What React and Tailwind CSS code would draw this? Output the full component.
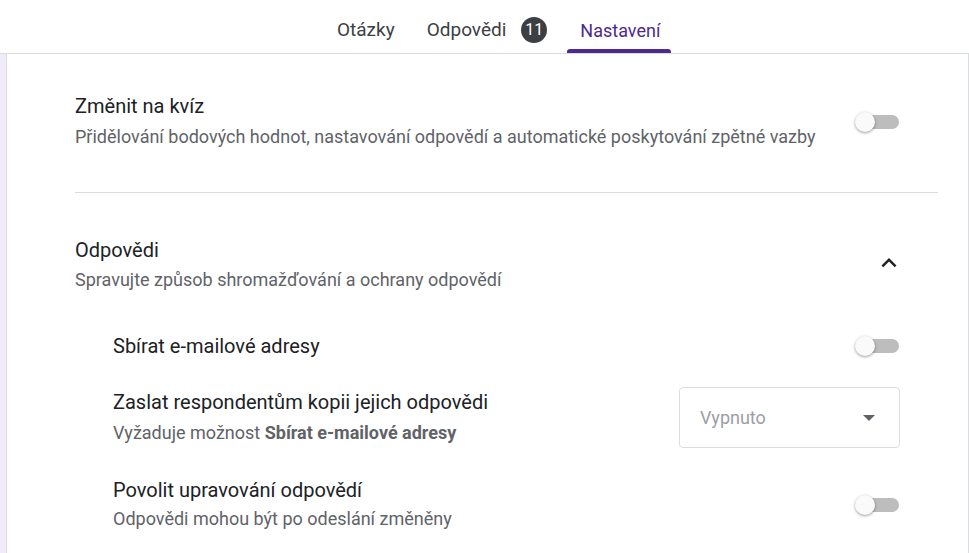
import React from "react";

const font = { fontFamily: "Roboto, 'Liberation Sans', sans-serif" };

function Toggle() {
  return (
    <div className="relative w-[44px] h-[20px] shrink-0">
      <div className="absolute right-0 top-[3px] w-[36px] h-[14px] rounded-full bg-[#bdbdbd]" />
      <div className="absolute left-0 top-0 w-[20px] h-[20px] rounded-full bg-[#fafafa] shadow-[0_1px_3px_rgba(0,0,0,0.4)]" />
    </div>
  );
}

function Tab({ children, active, className = "" }) {
  return (
    <div className={`relative h-full flex items-center px-[13px] pt-[7px] ${className}`}>
      {children}
      {active && <div className="absolute left-0 right-0 bottom-0 h-[4px] rounded-t-[3px] bg-[#4d2a8c]" />}
    </div>
  );
}

export default function App() {
  return (
    <div className="w-[969px] h-[553px] overflow-hidden bg-white flex flex-col" style={font}>
      <header className="h-[54px] shrink-0 border-b border-[#dadce0] flex items-stretch pl-[324px] gap-[6px] text-[19px] text-[#3c4043]">
        <Tab>Otázky</Tab>
        <Tab>
          <span>Odpovědi</span>
          <span className="ml-[15px] w-[26px] h-[26px] rounded-full bg-[#3c4043] text-white text-[16px] flex items-center justify-center">11</span>
        </Tab>
        <Tab active className="ml-[1px] pr-[11px] text-[18px] text-[#4d2a8c]">Nastavení</Tab>
      </header>

      <div className="flex flex-1">
        <div className="w-[6px] bg-[#f0ebf8] border-r border-[#dadce0] box-content" />
        <main className="flex-1 border-r border-[#dadce0] pl-[68px] pr-[30px] pt-[40px]">
          <section className="flex items-center justify-between pr-[39px]">
            <div>
              <div className="text-[20px] leading-[24px] text-[#202124]">Změnit na kvíz</div>
              <div className="mt-[7px] text-[18px] leading-[24px] text-[#5f6368]">
                Přidělování bodových hodnot, nastavování odpovědí a automatické poskytování zpětné vazby
              </div>
            </div>
            <Toggle />
          </section>

          <div className="mt-[43px] h-px bg-[#dadce0]" />

          <section className="mt-[45px] flex items-center justify-between pr-[34px]">
            <div>
              <div className="text-[20px] leading-[24px] text-[#202124]">Odpovědi</div>
              <div className="mt-[6px] text-[18px] leading-[24px] text-[#5f6368]">
                Spravujte způsob shromažďování a ochrany odpovědí
              </div>
            </div>
            <svg width="30" height="30" viewBox="0 0 24 24" className="mt-[-4px]">
              <path d="M7.41 15.41 12 10.83l4.59 4.58L18 14l-6-6-6 6z" fill="#202124" />
            </svg>
          </section>

          <div className="pl-[38px] pr-[39px]">
            <div className="mt-[42px] flex items-center justify-between">
              <div className="text-[20px] leading-[24px] text-[#202124]">Sbírat e-mailové adresy</div>
              <Toggle />
            </div>

            <div className="mt-[29px] flex items-center justify-between">
              <div>
                <div className="text-[20px] leading-[24px] text-[#202124]">Zaslat respondentům kopii jejich odpovědi</div>
                <div className="mt-[7px] text-[18px] leading-[24px] text-[#5f6368]">
                  Vyžaduje možnost <span className="font-bold">Sbírat e-mailové adresy</span>
                </div>
              </div>
              <div className="w-[221px] h-[61px] border border-[#dadce0] rounded-[4px] flex items-center justify-between pl-[20px] pr-[24px] -mr-px">
                <span className="text-[18px] text-[#9aa0a6]">Vypnuto</span>
                <span className="w-0 h-0 border-l-[6px] border-r-[6px] border-t-[6px] border-l-transparent border-r-transparent border-t-[#5f6368]" />
              </div>
            </div>

            <div className="mt-[30px] flex items-center justify-between">
              <div>
                <div className="text-[20px] leading-[24px] text-[#202124]">Povolit upravování odpovědí</div>
                <div className="mt-[5px] text-[18px] leading-[24px] text-[#5f6368]">Odpovědi mohou být po odeslání změněny</div>
              </div>
              <Toggle />
            </div>
          </div>
        </main>
      </div>
    </div>
  );
}
